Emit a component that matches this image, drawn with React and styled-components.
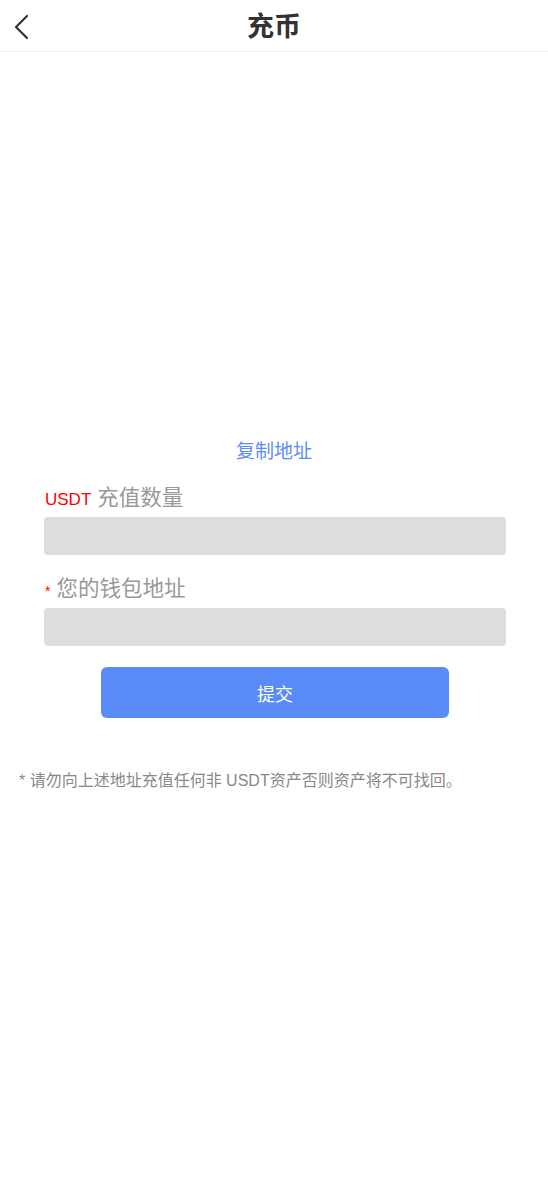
import React from 'react';
import styled, { createGlobalStyle } from 'styled-components';

const GlobalStyle = createGlobalStyle`
  html, body {
    margin: 0;
    padding: 0;
    background: #fff;
  }
  body {
    font-family: "Liberation Sans", "Noto Sans CJK SC", sans-serif;
  }
`;

const Page = styled.div`
  width: 548px;
  min-height: 1192px;
  background: #fff;
  display: flex;
  flex-direction: column;
`;

const Header = styled.header`
  height: 51px;
  border-bottom: 1px solid #f3f3f3;
  display: grid;
  grid-template-columns: 60px 1fr 60px;
  align-items: center;
`;

const BackButton = styled.button`
  border: none;
  background: none;
  padding: 2px 0 0 13px;
  height: 51px;
  display: flex;
  align-items: center;
  cursor: pointer;
`;

const Title = styled.h1`
  margin: 0;
  padding-top: 3px;
  text-align: center;
  font-size: 27px;
  font-weight: 700;
  color: #333;
  line-height: 48px;
`;

const QrArea = styled.div`
  height: 388px;
`;

const CopyLink = styled.div`
  text-align: center;
  font-size: 19px;
  line-height: 24px;
  color: #5b8cf8;
  cursor: pointer;
`;

const Form = styled.form`
  display: flex;
  flex-direction: column;
  padding: 0 42px 0 44px;
  margin-top: 20px;
`;

const Label = styled.label`
  display: flex;
  align-items: baseline;
  gap: 6px;
  height: 28px;
  font-size: 21.5px;
  line-height: 28px;
  color: #999;
  margin-top: ${p => (p.$first ? '0' : '20px')};
  padding-left: 1px;
`;

const Unit = styled.span`
  color: #f00;
  font-size: 17px;
`;

const Star = styled.span`
  color: #f00;
  font-size: 14px;
`;

const Input = styled.input`
  margin-top: 5px;
  height: 38px;
  box-sizing: border-box;
  border: none;
  border-radius: 4px;
  background: #ddd;
  padding: 0 10px;
  font-size: 16px;
  outline: none;
`;

const Submit = styled.button`
  align-self: center;
  margin-top: 21px;
  width: 348px;
  height: 51px;
  border: none;
  border-radius: 6px;
  background: #598bf7;
  color: #fff;
  font-size: 18px;
  font-family: "Noto Sans CJK SC", sans-serif;
  cursor: pointer;
`;

const Note = styled.p`
  margin: 52px 0 0;
  padding-left: 19px;
  font-size: 16px;
  line-height: 22px;
  color: #888;
`;

const ChevronLeft = () => (
  <svg width="18" height="26" viewBox="0 0 18 26" fill="none">
    <path d="M14 2 L3 13 L14 24" stroke="#333" strokeWidth="2.2" strokeLinecap="round" strokeLinejoin="round" />
  </svg>
);

export default function App() {
  return (
    <Page>
      <GlobalStyle />
      <Header>
        <BackButton aria-label="back">
          <ChevronLeft />
        </BackButton>
        <Title>充币</Title>
        <span />
      </Header>
      <QrArea />
      <CopyLink>复制地址</CopyLink>
      <Form onSubmit={e => e.preventDefault()}>
        <Label $first>
          <Unit>USDT</Unit>
          充值数量
        </Label>
        <Input type="text" />
        <Label>
          <Star>*</Star>
          您的钱包地址
        </Label>
        <Input type="text" />
        <Submit type="submit">提交</Submit>
      </Form>
      <Note>* 请勿向上述地址充值任何非 USDT资产否则资产将不可找回。</Note>
    </Page>
  );
}
